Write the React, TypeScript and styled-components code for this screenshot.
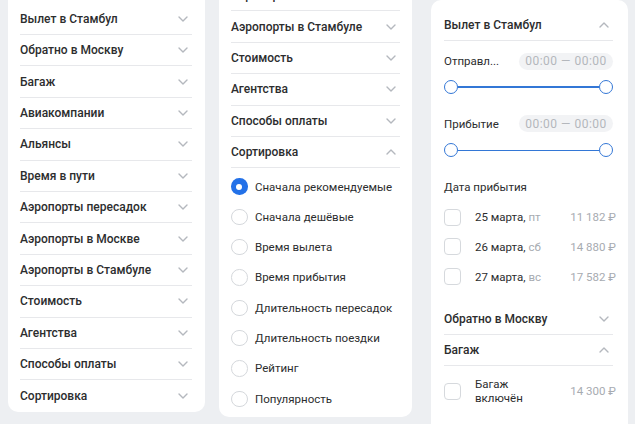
import React from "react";
import styled, { createGlobalStyle } from "styled-components";

const GlobalStyle = createGlobalStyle`
  html, body { margin: 0; padding: 0; }
  body {
    background: #edeff2;
    font-family: Roboto, "Noto Sans", sans-serif;
    color: #2c2d2e;
    -webkit-font-smoothing: antialiased;
  }
  * { box-sizing: border-box; }
`;

const Page = styled.div`
  display: flex;
  align-items: flex-start;
  width: 640px;
  height: 424px;
  overflow: hidden;
  background: #edeff2;
`;

const Card = styled.section<{ $w: number; $ml: number; $mt: number; $pad: string; $minH?: number }>`
  flex: none;
  width: ${(p) => p.$w}px;
  margin-left: ${(p) => p.$ml}px;
  margin-top: ${(p) => p.$mt}px;
  padding: ${(p) => p.$pad};
  min-height: ${(p) => (p.$minH ? `${p.$minH}px` : "0")};
  background: #ffffff;
  border-radius: 10px;
`;

const EdgeStrip = styled.div`
  flex: none;
  width: 5px;
  height: 424px;
  margin-left: 7px;
  background: #ffffff;
`;

const HeadRow = styled.div<{ $divider?: boolean; $mt?: number }>`
  display: flex;
  align-items: center;
  justify-content: space-between;
  height: 31.4px;
  margin-top: ${(p) => p.$mt ?? 0}px;
  border-bottom: ${(p) => (p.$divider ? "1px solid #e7e8eb" : "none")};
  font-size: 12px;
  font-weight: 500;
  color: #2c2d2e;
  white-space: nowrap;
`;

const ChevronSvg = styled.svg<{ $up?: boolean }>`
  flex: none;
  width: 10px;
  height: 6px;
  margin-right: 4px;
  transform: ${(p) => (p.$up ? "rotate(180deg)" : "none")};
`;

const Chevron = ({ up }: { up?: boolean }) => (
  <ChevronSvg $up={up} viewBox="0 0 10 6" fill="none">
    <path d="M1 1l4 4 4-4" stroke="#b4b8be" strokeWidth="1.4" strokeLinecap="round" strokeLinejoin="round" />
  </ChevronSvg>
);

const Head = ({ title, up, divider = true, mt }: { title: string; up?: boolean; divider?: boolean; mt?: number }) => (
  <HeadRow $divider={divider} $mt={mt}>
    <span>{title}</span>
    <Chevron up={up} />
  </HeadRow>
);

/* radio list */
const RadioList = styled.div`
  padding: 3px 0 3px;
`;

const RadioRow = styled.div`
  display: flex;
  align-items: center;
  gap: 7.5px;
  height: 30.33px;
  font-size: 11.5px;
  color: #2c2d2e;
  white-space: nowrap;
`;

const RadioMark = styled.span<{ $on?: boolean }>`
  position: relative;
  flex: none;
  width: 16.5px;
  height: 16.5px;
  border-radius: 50%;
  background: ${(p) => (p.$on ? "#2371e8" : "#fff")};
  border: ${(p) => (p.$on ? "none" : "1.5px solid #d5d8dc")};
  &::after {
    content: "";
    display: ${(p) => (p.$on ? "block" : "none")};
    position: absolute;
    left: 5.25px;
    top: 5.25px;
    width: 6px;
    height: 6px;
    border-radius: 50%;
    background: #fff;
  }
`;

/* panel 3 */
const TimeRow = styled.div<{ $mt: number }>`
  display: flex;
  align-items: center;
  justify-content: space-between;
  height: 17px;
  margin-top: ${(p) => p.$mt}px;
`;

const Label = styled.span`
  font-size: 11.5px;
  color: #2c2d2e;
  white-space: nowrap;
`;

const Pill = styled.span`
  display: flex;
  align-items: center;
  justify-content: center;
  width: 94px;
  height: 17px;
  border-radius: 9px;
  background: #f2f3f5;
  color: #b4b7bc;
  font-size: 12px;
  letter-spacing: 0.5px;
  white-space: nowrap;
`;

const Slider = styled.div<{ $mt: number }>`
  display: flex;
  align-items: center;
  height: 14px;
  margin-top: ${(p) => p.$mt}px;
`;

const Thumb = styled.span`
  flex: none;
  width: 14px;
  height: 14px;
  border-radius: 50%;
  border: 1.5px solid #3377d6;
  background: #fff;
`;

const Track = styled.span`
  flex: 1;
  height: 1.6px;
  background: #3377d6;
`;

const SubTitle = styled.div<{ $mt: number }>`
  margin-top: ${(p) => p.$mt}px;
  line-height: 16px;
  font-size: 11.5px;
  color: #2c2d2e;
`;

const CheckList = styled.div<{ $mt: number }>`
  margin-top: ${(p) => p.$mt}px;
`;

const CheckRow = styled.div<{ $h: number }>`
  display: flex;
  align-items: center;
  height: ${(p) => p.$h}px;
  font-size: 11.5px;
  color: #2c2d2e;
  white-space: nowrap;
`;

const Box = styled.span`
  flex: none;
  width: 17px;
  height: 17px;
  border-radius: 4px;
  border: 1.5px solid #d6d9dd;
  background: #fff;
`;

const CheckText = styled.span`
  margin-left: 14px;
  line-height: 14px;
`;

const Muted = styled.span`
  color: #a7abb1;
`;

const Price = styled.span`
  margin-left: auto;
  margin-right: -3px;
  font-size: 11.5px;
  color: #a7abb1;
`;

const leftRows = [
  "Вылет в Стамбул",
  "Обратно в Москву",
  "Багаж",
  "Авиакомпании",
  "Альянсы",
  "Время в пути",
  "Аэропорты пересадок",
  "Аэропорты в Москве",
  "Аэропорты в Стамбуле",
  "Стоимость",
  "Агентства",
  "Способы оплаты",
  "Сортировка",
];

const midRows = ["Аэропорты в Москве", "Аэропорты в Стамбуле", "Стоимость", "Агентства", "Способы оплаты"];

const sortOptions = [
  "Сначала рекомендуемые",
  "Сначала дешёвые",
  "Время вылета",
  "Время прибытия",
  "Длительность пересадок",
  "Длительность поездки",
  "Рейтинг",
  "Популярность",
];

const dates = [
  { d: "25 марта", w: "пт", p: "11 182 ₽" },
  { d: "26 марта", w: "сб", p: "14 880 ₽" },
  { d: "27 марта", w: "вс", p: "17 582 ₽" },
];

export default function App() {
  return (
    <>
      <GlobalStyle />
      <Page>
        <Card $w={197} $ml={8} $mt={-10} $pad="13.6px 13px 0.6px 12px">
          {leftRows.map((t, i) => (
            <Head key={t} title={t} divider={i < leftRows.length - 1} />
          ))}
        </Card>

        <Card $w={193} $ml={14} $mt={-20} $pad="0 12px 0 12px">
          {midRows.map((t) => (
            <Head key={t} title={t} />
          ))}
          <Head title="Сортировка" up />
          <RadioList>
            {sortOptions.map((o, i) => (
              <RadioRow key={o}>
                <RadioMark $on={i === 0} />
                <span>{o}</span>
              </RadioRow>
            ))}
          </RadioList>
        </Card>

        <Card $w={197} $ml={19} $mt={0} $pad="10px 15px 0 13px" $minH={440}>
          <Head title="Вылет в Стамбул" up />
          <TimeRow $mt={11.3}>
            <Label>Отправл...</Label>
            <Pill>00:00 — 00:00</Pill>
          </TimeRow>
          <Slider $mt={10.3}>
            <Thumb />
            <Track />
            <Thumb />
          </Slider>
          <TimeRow $mt={21.2}>
            <Label>Прибытие</Label>
            <Pill>00:00 — 00:00</Pill>
          </TimeRow>
          <Slider $mt={11.2}>
            <Thumb />
            <Track />
            <Thumb />
          </Slider>
          <SubTitle $mt={21.6}>Дата прибытия</SubTitle>
          <CheckList $mt={7.5}>
            {dates.map((r) => (
              <CheckRow key={r.d} $h={29.7}>
                <Box />
                <CheckText>
                  {r.d}, <Muted>{r.w}</Muted>
                </CheckText>
                <Price>{r.p}</Price>
              </CheckRow>
            ))}
          </CheckList>
          <Head title="Обратно в Москву" mt={12} />
          <Head title="Багаж" up />
          <CheckList $mt={10}>
            <CheckRow $h={30}>
              <Box />
              <CheckText>
                Багаж
                <br />
                включён
              </CheckText>
              <Price>14 300 ₽</Price>
            </CheckRow>
          </CheckList>
        </Card>
        <EdgeStrip />
      </Page>
    </>
  );
}
